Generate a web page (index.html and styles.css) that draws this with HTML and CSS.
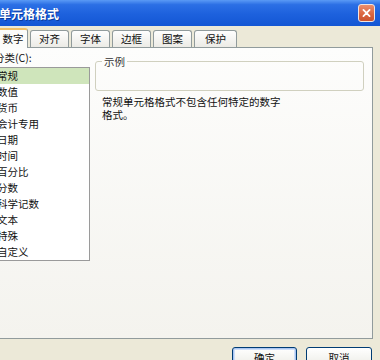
FILE: index.html
```html
<!DOCTYPE html>
<html lang="zh-CN">
<head>
    <meta charset="UTF-8">
    <title>单元格格式</title>
    <link rel="stylesheet" href="styles.css">
</head>
<body>

    <div class="dialog">
        <div class="titlebar">
            <span class="title">单元格格式</span>
            <span class="close">
                <svg width="17" height="18" viewBox="0 0 17 18">
                    <path d="M5 5.5 L12 12.5 M12 5.5 L5 12.5" stroke="#fff" stroke-width="2" stroke-linecap="round"/>
                </svg>
            </span>
        </div>

        <div class="tabs">
            <div class="tab active">数字</div>
            <div class="tab">对齐</div>
            <div class="tab">字体</div>
            <div class="tab">边框</div>
            <div class="tab">图案</div>
            <div class="tab wide">保护</div>
        </div>

        <div class="panel">
            <div class="left">
                <div class="label">分类(C):</div>
                <ul class="list">
                    <li class="selected">常规</li>
                    <li>数值</li>
                    <li>货币</li>
                    <li>会计专用</li>
                    <li>日期</li>
                    <li>时间</li>
                    <li>百分比</li>
                    <li>分数</li>
                    <li>科学记数</li>
                    <li>文本</li>
                    <li>特殊</li>
                    <li>自定义</li>
                </ul>
            </div>
            <div class="right">
                <fieldset class="sample">
                    <legend>示例</legend>
                </fieldset>
                <p class="desc">常规单元格格式不包含任何特定的数字<br>格式。</p>
            </div>
        </div>

        <div class="buttons">
            <button class="btn default">确定</button>
            <button class="btn">取消</button>
        </div>
    </div>

</body>
</html>
```

FILE: styles.css
```css
body {
    margin: 0;
    width: 380px;
    height: 360px;
    overflow: hidden;
    background: #ece9d8;
    font-family: "Noto Sans CJK SC", "Noto Sans", sans-serif;
    font-size: 10.5px;
    color: #111;
}

.dialog {
    width: 390px;
    margin-left: -10px;
}

/* title bar */
.titlebar {
    height: 26px;
    display: flex;
    align-items: center;
    justify-content: space-between;
    padding: 0 5px 0 9px;
    box-sizing: border-box;
    background: linear-gradient(#5a9af5 0%, #2b6fe5 18%, #1d61dd 55%, #1356d4 100%);
}

.title {
    color: #fff;
    font-size: 12px;
    font-weight: bold;
    text-shadow: 1px 1px 0 #0a3a9c;
}

.close {
    width: 17px;
    height: 18px;
    box-sizing: border-box;
    border: 1px solid #f2e4df;
    border-radius: 3px;
    background: linear-gradient(#eb8e6c, #d9643f 60%, #c9532f);
    display: flex;
    align-items: center;
    justify-content: center;
}

.close svg {
    display: block;
}

/* tabs */
.tabs {
    display: flex;
    align-items: flex-end;
    height: 19px;
    margin-top: 2px;
    padding-left: 2px;
    position: relative;
    z-index: 1;
}

.tab {
    width: 39px;
    height: 17px;
    box-sizing: border-box;
    margin-left: 2px;
    border: 1px solid #919b9c;
    border-bottom: none;
    border-radius: 3px 3px 0 0;
    background: linear-gradient(#fefefe, #ecebe6);
    text-align: center;
    line-height: 16px;
}

.tab.wide {
    width: 43px;
}

.tab.active {
    width: 36px;
    height: 20px;
    margin-left: 0;
    margin-bottom: -1px;
    border-top: 2px solid #f1c067;
    background: #fcfcfa;
    line-height: 18px;
    padding-left: 6px;
}

/* tab page */
.panel {
    height: 292px;
    box-sizing: border-box;
    margin-right: 7px;
    border: 1px solid #919b9c;
    background: linear-gradient(#fdfdfc, #f4f3ee);
    display: flex;
    padding: 3px 0 0 3px;
}

.left {
    width: 96px;
}

.label {
    line-height: 13px;
    height: 13px;
    margin-bottom: 3px;
}

.list {
    list-style: none;
    margin: 0;
    padding: 0;
    height: 194px;
    box-sizing: border-box;
    border: 1px solid #9a9a9a;
    background: #fff;
}

.list li {
    height: 16px;
    line-height: 16px;
    padding-left: 2px;
}

.list li.selected {
    background: #cfe5bb;
}

.right {
    width: 269px;
    margin-left: 5px;
}

.sample {
    margin: 4px 0 0 0;
    padding: 0;
    height: 36px;
    box-sizing: border-box;
    border: 1px solid #d0d0bf;
    border-radius: 3px;
    min-inline-size: 0;
}

.sample legend {
    margin-left: 6px;
    padding: 0 2px;
    line-height: 13px;
    color: #333;
}

.desc {
    margin: 4px 0 0 7px;
    line-height: 13px;
}

/* buttons */
.buttons {
    display: flex;
    justify-content: flex-end;
    gap: 9px;
    padding: 8px 8px 0 0;
}

.btn {
    width: 66px;
    height: 21px;
    box-sizing: border-box;
    border: 1px solid #003c74;
    border-radius: 3px;
    background: linear-gradient(#ffffff, #f3f3ef 60%, #dcd8ce);
    font-family: inherit;
    font-size: 10.5px;
    color: #111;
    padding: 1px 0 0 0;
    line-height: 14px;
    text-align: center;
    vertical-align: top;
}

.btn.default {
    width: 65px;
    box-shadow: inset 0 0 0 1px #a9c5f2, inset 0 0 0 2px #cfdff8;
}
```
